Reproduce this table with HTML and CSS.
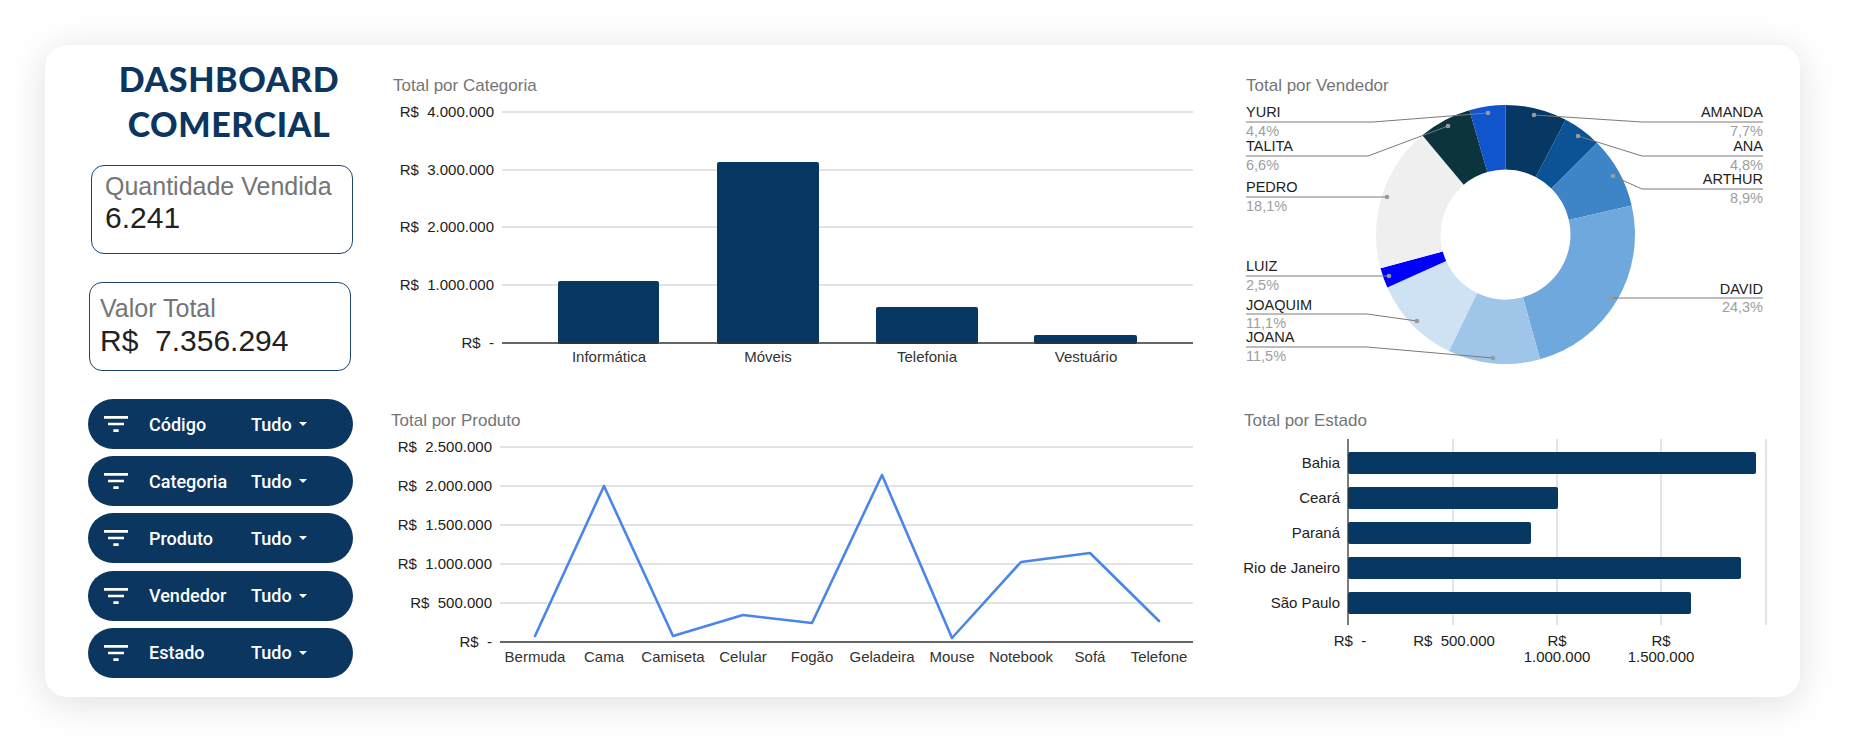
FILE: index.html
```html
<!DOCTYPE html>
<html lang="pt-BR">
<head>
<meta charset="utf-8">
<title>Dashboard Comercial</title>
<link rel="stylesheet" href="styles.css">
</head>
<body>
<div class="page">
  <div class="card">
    <aside class="sidebar">
      <h1 class="title">DASHBOARD<br>COMERCIAL</h1>
      <div class="kpi kpi-qty">
        <div class="kpi-label">Quantidade Vendida</div>
        <div class="kpi-value">6.241</div>
      </div>
      <div class="kpi kpi-total">
        <div class="kpi-label">Valor Total</div>
        <div class="kpi-value">R$&nbsp; 7.356.294</div>
      </div>
      <div class="filters">
        <div class="pill"><svg class="pill-icon" viewBox="0 0 24 24"><path d="M10 18h4v-2h-4v2zM3 6v2h18V6H3zm3 7h12v-2H6v2z"/></svg><span class="pill-label">Código</span><span class="pill-value">Tudo</span><span class="caret"></span></div>
        <div class="pill"><svg class="pill-icon" viewBox="0 0 24 24"><path d="M10 18h4v-2h-4v2zM3 6v2h18V6H3zm3 7h12v-2H6v2z"/></svg><span class="pill-label">Categoria</span><span class="pill-value">Tudo</span><span class="caret"></span></div>
        <div class="pill"><svg class="pill-icon" viewBox="0 0 24 24"><path d="M10 18h4v-2h-4v2zM3 6v2h18V6H3zm3 7h12v-2H6v2z"/></svg><span class="pill-label">Produto</span><span class="pill-value">Tudo</span><span class="caret"></span></div>
        <div class="pill"><svg class="pill-icon" viewBox="0 0 24 24"><path d="M10 18h4v-2h-4v2zM3 6v2h18V6H3zm3 7h12v-2H6v2z"/></svg><span class="pill-label">Vendedor</span><span class="pill-value">Tudo</span><span class="caret"></span></div>
        <div class="pill"><svg class="pill-icon" viewBox="0 0 24 24"><path d="M10 18h4v-2h-4v2zM3 6v2h18V6H3zm3 7h12v-2H6v2z"/></svg><span class="pill-label">Estado</span><span class="pill-value">Tudo</span><span class="caret"></span></div>
      </div>
    </aside>

    <!-- Total por Categoria -->
    <svg class="chart chart-cat" width="830" height="325" viewBox="380 55 830 325">
      <text class="ttl" x="393" y="91">Total por Categoria</text>
      <line class="grid" x1="502" x2="1193" y1="112" y2="112"/>
      <line class="grid" x1="502" x2="1193" y1="170" y2="170"/>
      <line class="grid" x1="502" x2="1193" y1="227" y2="227"/>
      <line class="grid" x1="502" x2="1193" y1="285" y2="285"/>
      <text class="ax end" x="494" y="117">R$  4.000.000</text>
      <text class="ax end" x="494" y="175">R$  3.000.000</text>
      <text class="ax end" x="494" y="232">R$  2.000.000</text>
      <text class="ax end" x="494" y="290">R$  1.000.000</text>
      <text class="ax end" x="494" y="348">R$  -</text>
      <rect class="bar" x="558" y="281" width="101" height="63" rx="2"/>
      <rect class="bar" x="717" y="162" width="102" height="182" rx="2"/>
      <rect class="bar" x="876" y="307" width="102" height="37" rx="2"/>
      <rect class="bar" x="1034" y="335" width="103" height="9" rx="2"/>
      <line class="axis" x1="502" x2="1193" y1="343" y2="343"/>
      <text class="axl mid" x="609" y="362">Informática</text>
      <text class="axl mid" x="768" y="362">Móveis</text>
      <text class="axl mid" x="927" y="362">Telefonia</text>
      <text class="axl mid" x="1086" y="362">Vestuário</text>
    </svg>

    <!-- Total por Vendedor -->
    <svg class="chart chart-vend" width="560" height="325" viewBox="1230 55 560 325">
      <text class="ttl" x="1246" y="91">Total por Vendedor</text>
      <path class="s1" d="M1505.5 105 A129.5 129.5 0 0 1 1565.74 119.87 L1535.74 176.96 A65 65 0 0 0 1505.5 169.5 Z"/>
      <path class="s2" d="M1565.74 119.87 A129.5 129.5 0 0 1 1597.07 142.93 L1551.46 188.54 A65 65 0 0 0 1535.74 176.96 Z"/>
      <path class="s3" d="M1597.07 142.93 A129.5 129.5 0 0 1 1631.69 205.45 L1568.84 219.92 A65 65 0 0 0 1551.46 188.54 Z"/>
      <path class="s4" d="M1631.69 205.45 A129.5 129.5 0 0 1 1540.06 359.3 L1522.85 297.14 A65 65 0 0 0 1568.84 219.92 Z"/>
      <path class="s5" d="M1540.06 359.3 A129.5 129.5 0 0 1 1448.9 350.97 L1477.09 292.96 A65 65 0 0 0 1522.85 297.14 Z"/>
      <path class="s6" d="M1448.9 350.97 A129.5 129.5 0 0 1 1387.32 287.41 L1446.18 261.06 A65 65 0 0 0 1477.09 292.96 Z"/>
      <path class="s7" d="M1387.32 287.41 A129.5 129.5 0 0 1 1380.49 268.27 L1442.76 251.45 A65 65 0 0 0 1446.18 261.06 Z"/>
      <path class="s8" d="M1380.49 268.27 A129.5 129.5 0 0 1 1422.32 135.25 L1463.75 184.68 A65 65 0 0 0 1442.76 251.45 Z"/>
      <path class="s9" d="M1422.32 135.25 A129.5 129.5 0 0 1 1469.37 110.14 L1487.36 172.08 A65 65 0 0 0 1463.75 184.68 Z"/>
      <path class="s10" d="M1469.37 110.14 A129.5 129.5 0 0 1 1505.5 105 L1505.5 169.5 A65 65 0 0 0 1487.36 172.08 Z"/>

      <path class="lead" d="M1246 122 H1373 L1488 113"/>
      <path class="lead" d="M1246 156 H1368 L1448 126"/>
      <path class="lead" d="M1246 197 H1387"/>
      <path class="lead" d="M1246 276 H1389"/>
      <path class="lead" d="M1246 314 H1367 L1417 321"/>
      <path class="lead" d="M1246 347 H1367 L1493 358"/>
      <path class="lead" d="M1763 122 H1642 L1534 115"/>
      <path class="lead" d="M1763 156 H1642 L1578 136"/>
      <path class="lead" d="M1763 189 H1642 L1613 176"/>
      <path class="lead" d="M1763 298 H1611"/>
      <circle class="dot" cx="1488" cy="113" r="2.3"/>
      <circle class="dot" cx="1448" cy="126" r="2.3"/>
      <circle class="dot" cx="1387" cy="197" r="2.3"/>
      <circle class="dot" cx="1389" cy="276" r="2.3"/>
      <circle class="dot" cx="1417" cy="321" r="2.3"/>
      <circle class="dot" cx="1493" cy="358" r="2.3"/>
      <circle class="dot" cx="1534" cy="115" r="2.3"/>
      <circle class="dot" cx="1578" cy="136" r="2.3"/>
      <circle class="dot" cx="1613" cy="176" r="2.3"/>
      <circle class="dot" cx="1611" cy="298" r="2.3"/>

      <text class="lg" x="1246" y="117">YURI</text>
      <text class="lgp" x="1246" y="136">4,4%</text>
      <text class="lg" x="1246" y="151">TALITA</text>
      <text class="lgp" x="1246" y="170">6,6%</text>
      <text class="lg" x="1246" y="192">PEDRO</text>
      <text class="lgp" x="1246" y="211">18,1%</text>
      <text class="lg" x="1246" y="271">LUIZ</text>
      <text class="lgp" x="1246" y="290">2,5%</text>
      <text class="lg" x="1246" y="310">JOAQUIM</text>
      <text class="lgp" x="1246" y="328">11,1%</text>
      <text class="lg" x="1246" y="342">JOANA</text>
      <text class="lgp" x="1246" y="361">11,5%</text>
      <text class="lg end" x="1763" y="117">AMANDA</text>
      <text class="lgp end" x="1763" y="136">7,7%</text>
      <text class="lg end" x="1763" y="151">ANA</text>
      <text class="lgp end" x="1763" y="170">4,8%</text>
      <text class="lg end" x="1763" y="184">ARTHUR</text>
      <text class="lgp end" x="1763" y="203">8,9%</text>
      <text class="lg end" x="1763" y="294">DAVID</text>
      <text class="lgp end" x="1763" y="312">24,3%</text>
    </svg>

    <!-- Total por Produto -->
    <svg class="chart chart-prod" width="830" height="295" viewBox="380 385 830 295">
      <text class="ttl" x="391" y="426">Total por Produto</text>
      <line class="grid" x1="500" x2="1193" y1="447" y2="447"/>
      <line class="grid" x1="500" x2="1193" y1="486" y2="486"/>
      <line class="grid" x1="500" x2="1193" y1="525" y2="525"/>
      <line class="grid" x1="500" x2="1193" y1="564" y2="564"/>
      <line class="grid" x1="500" x2="1193" y1="603" y2="603"/>
      <line class="axis" x1="500" x2="1193" y1="642" y2="642"/>
      <text class="ax end" x="492" y="452">R$  2.500.000</text>
      <text class="ax end" x="492" y="491">R$  2.000.000</text>
      <text class="ax end" x="492" y="530">R$  1.500.000</text>
      <text class="ax end" x="492" y="569">R$  1.000.000</text>
      <text class="ax end" x="492" y="608">R$  500.000</text>
      <text class="ax end" x="492" y="647">R$  -</text>
      <polyline class="line" points="535,636 604,486 673,636 743,615 812,623 882,475 952,638 1021,562 1090,553 1159,621"/>
      <text class="axl mid" x="535" y="662">Bermuda</text>
      <text class="axl mid" x="604" y="662">Cama</text>
      <text class="axl mid" x="673" y="662">Camiseta</text>
      <text class="axl mid" x="743" y="662">Celular</text>
      <text class="axl mid" x="812" y="662">Fogão</text>
      <text class="axl mid" x="882" y="662">Geladeira</text>
      <text class="axl mid" x="952" y="662">Mouse</text>
      <text class="axl mid" x="1021" y="662">Notebook</text>
      <text class="axl mid" x="1090" y="662">Sofá</text>
      <text class="axl mid" x="1159" y="662">Telefone</text>
    </svg>

    <!-- Total por Estado -->
    <svg class="chart chart-est" width="560" height="295" viewBox="1230 385 560 295">
      <text class="ttl" x="1244" y="426">Total por Estado</text>
      <line class="vgrid" x1="1453" x2="1453" y1="439" y2="625"/>
      <line class="vgrid" x1="1557" x2="1557" y1="439" y2="625"/>
      <line class="vgrid" x1="1661" x2="1661" y1="439" y2="625"/>
      <line class="vgrid" x1="1766" x2="1766" y1="439" y2="625"/>
      <rect class="bar" x="1348" y="452" width="408" height="22" rx="2"/>
      <rect class="bar" x="1348" y="487" width="210" height="22" rx="2"/>
      <rect class="bar" x="1348" y="522" width="183" height="22" rx="2"/>
      <rect class="bar" x="1348" y="557" width="393" height="22" rx="2"/>
      <rect class="bar" x="1348" y="592" width="343" height="22" rx="2"/>
      <line class="axis" x1="1348" x2="1348" y1="439" y2="625"/>
      <text class="ax end" x="1340" y="468">Bahia</text>
      <text class="ax end" x="1340" y="503">Ceará</text>
      <text class="ax end" x="1340" y="538">Paraná</text>
      <text class="ax end" x="1340" y="573">Rio de Janeiro</text>
      <text class="ax end" x="1340" y="608">São Paulo</text>
      <text class="ax mid" x="1350" y="646">R$  -</text>
      <text class="ax mid" x="1454" y="646">R$  500.000</text>
      <text class="ax mid" x="1557" y="646">R$</text>
      <text class="ax mid" x="1557" y="662">1.000.000</text>
      <text class="ax mid" x="1661" y="646">R$</text>
      <text class="ax mid" x="1661" y="662">1.500.000</text>
    </svg>
  </div>
</div>
</body>
</html>
```

FILE: styles.css
```css
html, body {
  margin: 0;
  padding: 0;
  background: #ffffff;
}

body {
  width: 1855px;
  height: 755px;
  overflow: hidden;
  font-family: "Liberation Sans", Arial, sans-serif;
}

.page {
  padding: 45px 0 0 45px;
}

.card {
  width: 1755px;
  height: 652px;
  box-sizing: border-box;
  background: #ffffff;
  border-radius: 22px;
  box-shadow: 0 6px 38px rgba(0, 0, 0, 0.13);
  padding: 10px 10px 17px 43px;
  display: grid;
  grid-template-columns: 292px 850px 560px;
  grid-template-rows: 325px 295px;
  row-gap: 5px;
}

/* ---------- sidebar ---------- */
.sidebar {
  grid-column: 1;
  grid-row: 1 / span 2;
  display: flex;
  flex-direction: column;
  width: 266px;
}

.title {
  margin: 1px 0 0 16px;
  text-align: center;
  font-family: Lato, "Liberation Sans", sans-serif;
  font-weight: 900;
  font-size: 34px;
  line-height: 45px;
  letter-spacing: 0.6px;
  color: #0b3660;
}

.kpi {
  width: 262px;
  height: 89px;
  box-sizing: border-box;
  border: 1px solid #1d4670;
  border-radius: 13px;
}

.kpi-qty {
  margin: 19px 0 0 3px;
  padding: 6px 0 0 13px;
}

.kpi-total {
  margin: 28px 0 0 1px;
  padding: 11px 0 0 10px;
}

.kpi-label {
  font-size: 25px;
  line-height: 29px;
  color: #757575;
}

.kpi-value {
  font-size: 30px;
  line-height: 33px;
  color: #222222;
}

.kpi-total .kpi-value {
  margin-top: 1px;
}

.filters {
  margin-top: 28px;
  display: flex;
  flex-direction: column;
  gap: 7.2px;
}

.pill {
  width: 265px;
  height: 50px;
  box-sizing: border-box;
  border-radius: 25px;
  background: #0b3660;
  display: flex;
  align-items: center;
  padding-left: 12px;
  color: #ffffff;
  font-family: Roboto, "Liberation Sans", sans-serif;
  font-weight: 500;
  font-size: 18px;
}

.pill-icon {
  width: 32px;
  height: 32px;
  fill: #ffffff;
  flex: none;
}

.pill-label {
  width: 102px;
  margin-left: 17px;
}

.caret {
  width: 0;
  height: 0;
  margin-left: 7px;
  border-left: 4px solid transparent;
  border-right: 4px solid transparent;
  border-top: 4px solid #ffffff;
}

/* ---------- charts ---------- */
.chart {
  display: block;
  font-family: "Liberation Sans", Arial, sans-serif;
}

.chart-cat { grid-column: 2; grid-row: 1; }
.chart-vend { grid-column: 3; grid-row: 1; }
.chart-prod { grid-column: 2; grid-row: 2; }
.chart-est { grid-column: 3; grid-row: 2; }

.ttl {
  font-size: 17px;
  fill: #757575;
}

.ax {
  font-size: 15px;
  fill: #222222;
  white-space: pre;
}

.axl {
  font-size: 15px;
  fill: #333333;
}

.end { text-anchor: end; }
.mid { text-anchor: middle; }

.grid {
  stroke: #dadada;
  stroke-width: 1.3;
}

.vgrid {
  stroke: #d6d6d6;
  stroke-width: 1.3;
}

.axis {
  stroke: #333333;
  stroke-width: 1.3;
}

.bar {
  fill: #073763;
}

.line {
  fill: none;
  stroke: #4a86e8;
  stroke-width: 2.6;
  stroke-linejoin: round;
  stroke-linecap: round;
}

/* donut */
.s1 { fill: #073763; }
.s2 { fill: #0b5394; }
.s3 { fill: #3d85c6; }
.s4 { fill: #6fa8dc; }
.s5 { fill: #9fc5e8; }
.s6 { fill: #cfe2f3; }
.s7 { fill: #0000ff; }
.s8 { fill: #efefef; }
.s9 { fill: #0c343d; }
.s10 { fill: #1155cc; }

.lead {
  fill: none;
  stroke: #7a7a7a;
  stroke-width: 1;
}

.dot {
  fill: #9a9a9a;
}

.lg {
  font-size: 14.5px;
  fill: #222222;
}

.lgp {
  font-size: 14.5px;
  fill: #9e9e9e;
}
```
